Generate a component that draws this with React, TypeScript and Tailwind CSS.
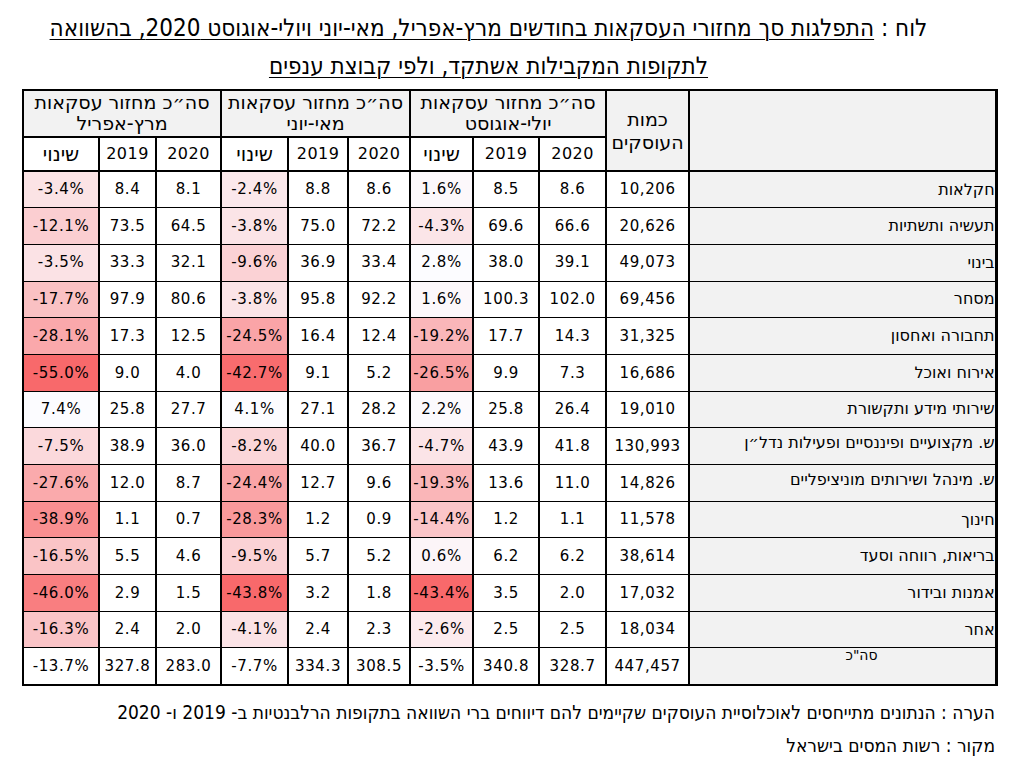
import React from "react";

type Group = [string, string, string]; // 2020, 2019, change

interface Row {
  name: string;
  count: string;
  jul: Group;
  may: Group;
  mar: Group;
  top?: boolean;
}

const ROWS: Row[] = [
  { name: "חקלאות", count: "10,206", jul: ["8.6", "8.5", "1.6%"], may: ["8.6", "8.8", "-2.4%"], mar: ["8.1", "8.4", "-3.4%"] },
  { name: "תעשיה ותשתיות", count: "20,626", jul: ["66.6", "69.6", "-4.3%"], may: ["72.2", "75.0", "-3.8%"], mar: ["64.5", "73.5", "-12.1%"] },
  { name: "בינוי", count: "49,073", jul: ["39.1", "38.0", "2.8%"], may: ["33.4", "36.9", "-9.6%"], mar: ["32.1", "33.3", "-3.5%"] },
  { name: "מסחר", count: "69,456", jul: ["102.0", "100.3", "1.6%"], may: ["92.2", "95.8", "-3.8%"], mar: ["80.6", "97.9", "-17.7%"] },
  { name: "תחבורה ואחסון", count: "31,325", jul: ["14.3", "17.7", "-19.2%"], may: ["12.4", "16.4", "-24.5%"], mar: ["12.5", "17.3", "-28.1%"] },
  { name: "אירוח ואוכל", count: "16,686", jul: ["7.3", "9.9", "-26.5%"], may: ["5.2", "9.1", "-42.7%"], mar: ["4.0", "9.0", "-55.0%"] },
  { name: "שירותי מידע ותקשורת", count: "19,010", jul: ["26.4", "25.8", "2.2%"], may: ["28.2", "27.1", "4.1%"], mar: ["27.7", "25.8", "7.4%"] },
  { name: "ש. מקצועיים ופיננסיים ופעילות נדל״ן", count: "130,993", jul: ["41.8", "43.9", "-4.7%"], may: ["36.7", "40.0", "-8.2%"], mar: ["36.0", "38.9", "-7.5%"], top: true },
  { name: "ש. מינהל ושירותים מוניציפליים", count: "14,826", jul: ["11.0", "13.6", "-19.3%"], may: ["9.6", "12.7", "-24.4%"], mar: ["8.7", "12.0", "-27.6%"], top: true },
  { name: "חינוך", count: "11,578", jul: ["1.1", "1.2", "-14.4%"], may: ["0.9", "1.2", "-28.3%"], mar: ["0.7", "1.1", "-38.9%"] },
  { name: "בריאות, רווחה וסעד", count: "38,614", jul: ["6.2", "6.2", "0.6%"], may: ["5.2", "5.7", "-9.5%"], mar: ["4.6", "5.5", "-16.5%"] },
  { name: "אמנות ובידור", count: "17,032", jul: ["2.0", "3.5", "-43.4%"], may: ["1.8", "3.2", "-43.8%"], mar: ["1.5", "2.9", "-46.0%"] },
  { name: "אחר", count: "18,034", jul: ["2.5", "2.5", "-2.6%"], may: ["2.3", "2.4", "-4.1%"], mar: ["2.0", "2.4", "-16.3%"] },
];

const TOTAL: Row = {
  name: 'סה"כ',
  count: "447,457",
  jul: ["328.7", "340.8", "-3.5%"],
  may: ["308.5", "334.3", "-7.7%"],
  mar: ["283.0", "327.8", "-13.7%"],
};

const body = { fontFamily: '"DejaVu Sans", Verdana, sans-serif' };
const narrow = {
  fontFamily: '"Liberation Sans Narrow", "DejaVu Sans Condensed", "Liberation Sans", sans-serif',
};

// excel style red-white scale, per column
function heat(v: number, min: number, max: number) {
  const t = Math.max(0, Math.min(1, (max - v) / (max - min)));
  const lo = [252, 252, 255];
  const hi = [248, 105, 107];
  const c = lo.map((a, i) => Math.round(a + (hi[i] - a) * t));
  return `rgb(${c[0]},${c[1]},${c[2]})`;
}

function range(key: "jul" | "may" | "mar") {
  const vals = ROWS.map((r) => parseFloat(r[key][2]));
  return { min: Math.min(...vals), max: Math.max(...vals) };
}

const SCALES = { jul: range("jul"), may: range("may"), mar: range("mar") };

const cell = "border-x-2 border-y border-black text-center text-[15px] tracking-[0.6px] text-black";

function GroupCells({ row, k, total }: { row: Row; k: "jul" | "may" | "mar"; total?: boolean }) {
  const [a, b, chg] = row[k];
  const s = SCALES[k];
  return (
    <>
      <td dir="ltr" className={cell}>{a}</td>
      <td dir="ltr" className={cell}>{b}</td>
      <td
        dir="ltr"
        className={cell}
        style={total ? undefined : { background: heat(parseFloat(chg), s.min, s.max) }}
      >
        {chg}
      </td>
    </>
  );
}

function GroupHead({ title }: { title: string }) {
  return (
    <th
      colSpan={3}
      className="border-2 border-black bg-[#f2f2f2] text-center align-top pt-[1px] font-normal text-[19px] leading-[21px] whitespace-nowrap"
    >
      <div>סה״כ מחזור עסקאות</div>
      <div>{title}</div>
    </th>
  );
}

export default function App() {
  return (
    <div className="w-[1017px] h-[775px] bg-white text-black overflow-hidden" style={body}>
      {/* title */}
      <div dir="rtl" className="pt-[9px] pr-[40px] text-center text-[24px] leading-[38px]" style={narrow}>
        <div>
          לוח :{" "}
          <span className="underline underline-offset-[3px] decoration-1">
            התפלגות סך מחזורי העסקאות בחודשים מרץ-אפריל, מאי-יוני ויולי-אוגוסט 2020, בהשוואה
          </span>
        </div>
        <div>
          <span className="underline underline-offset-[3px] decoration-1">
            לתקופות המקבילות אשתקד, ולפי קבוצת ענפים
          </span>
        </div>
      </div>

      <div className="pl-[22px] mt-[4px]">
        <table dir="rtl" className="w-[975px] table-fixed border-collapse border-2 border-r-[3px] border-black">
          <colgroup>
            <col className="w-[307px]" />
            <col className="w-[83px]" />
            <col className="w-[67px]" />
            <col className="w-[66px]" />
            <col className="w-[63px]" />
            <col className="w-[62px]" />
            <col className="w-[60px]" />
            <col className="w-[67px]" />
            <col className="w-[65px]" />
            <col className="w-[57px]" />
            <col className="w-[76px]" />
          </colgroup>
          <thead>
            <tr className="h-[47px]">
              <th rowSpan={2} className="border-2 border-r-[3px] border-black bg-[#f2f2f2]" />
              <th
                rowSpan={2}
                className="border-2 border-black bg-[#f2f2f2] font-normal text-[19px] leading-[23px] text-center whitespace-nowrap"
              >
                <div>כמות</div>
                <div>העוסקים</div>
              </th>
              <GroupHead title="יולי-אוגוסט" />
              <GroupHead title="מאי-יוני" />
              <GroupHead title="מרץ-אפריל" />
            </tr>
            <tr className="h-[34px]">
              {[0, 1, 2].map((i) => (
                <React.Fragment key={i}>
                  <th className="border-2 border-black font-normal text-[16px] tracking-[0.5px]">2020</th>
                  <th className="border-2 border-black font-normal text-[16px] tracking-[0.5px]">2019</th>
                  <th className="border-2 border-black font-normal text-[20px]">שינוי</th>
                </React.Fragment>
              ))}
            </tr>
          </thead>
          <tbody>
            {ROWS.map((r) => (
              <tr key={r.name} className="h-[36.7px]">
                <td
                  className={`border-y border-l-2 border-black bg-[#f2f2f2] text-right text-[16px] pr-0 ${
                    r.top ? "align-top pt-[3px]" : "align-middle"
                  }`}
                >
                  {r.name}
                </td>
                <td dir="ltr" className={cell}>{r.count}</td>
                <GroupCells row={r} k="jul" />
                <GroupCells row={r} k="may" />
                <GroupCells row={r} k="mar" />
              </tr>
            ))}
            <tr className="h-[36.7px]">
              <td className="border-y border-l-2 border-black bg-[#f2f2f2] text-right align-top pt-0 pr-[117px] text-[14px] leading-[14px]">
                {TOTAL.name}
              </td>
              <td dir="ltr" className={cell}>{TOTAL.count}</td>
              <GroupCells row={TOTAL} k="jul" total />
              <GroupCells row={TOTAL} k="may" total />
              <GroupCells row={TOTAL} k="mar" total />
            </tr>
          </tbody>
        </table>
      </div>

      {/* footnotes */}
      <div dir="rtl" className="mt-[10px] pr-[22px] text-[19px] leading-[33px]" style={narrow}>
        <div>הערה : הנתונים מתייחסים לאוכלוסיית העוסקים שקיימים להם דיווחים ברי השוואה בתקופות הרלבנטיות ב- 2019 ו- 2020</div>
        <div>מקור : רשות המסים בישראל</div>
      </div>
    </div>
  );
}
